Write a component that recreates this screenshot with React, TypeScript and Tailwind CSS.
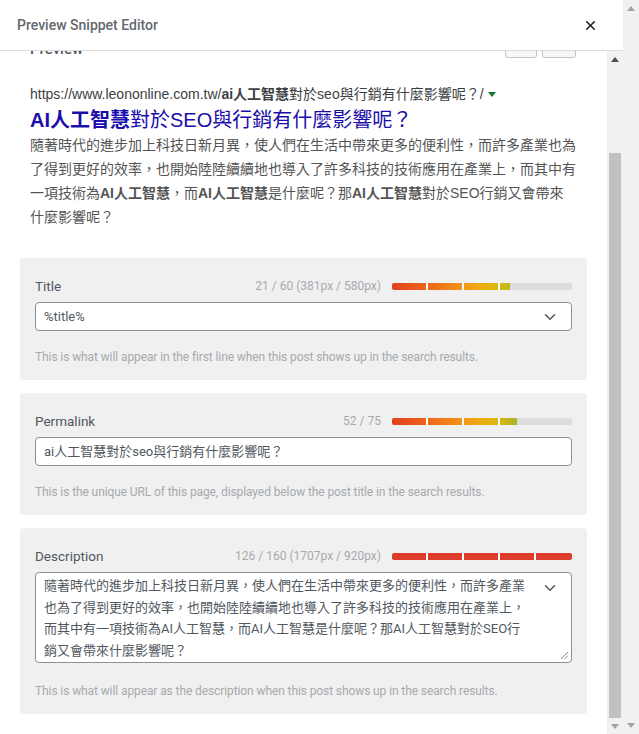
import { ChevronDown, Monitor, Smartphone, X } from "lucide-react";

const ui = "font-['Roboto','Noto_Sans_CJK_TC',sans-serif]";
const serp = "font-['Liberation_Sans','Noto_Sans_CJK_TC',sans-serif]";

function Arrow({ up, color }: { up?: boolean; color: string }) {
  return (
    <svg width="8" height="5" viewBox="0 0 8 5">
      <polygon points={up ? "0,5 8,5 4,0" : "0,0 8,0 4,5"} fill={color} />
    </svg>
  );
}

function LengthBar({ used, over }: { used: number; over?: boolean }) {
  const fill = Math.round(180 * Math.min(used, 1));
  const marks = [34, 70, 106, 142].filter((m) => m < fill);
  return (
    <div className="relative ml-[11px] h-[7px] w-[180px] shrink-0 overflow-hidden rounded-[2px] bg-[#dcdcde]">
      {over ? (
        <div className="h-full w-full bg-[#dd3b2c]" />
      ) : (
        <div className="h-full overflow-hidden" style={{ width: fill }}>
          <div className="h-full w-[180px] bg-[linear-gradient(to_right,#e2401c_0%,#ef6a1a_22%,#f2921a_38%,#eeaa12_48%,#e2b50c_56%,#cfb814_62%,#b0b526_68%,#7bb52c_100%)]" />
        </div>
      )}
      {marks.map((m) => (
        <div key={m} className="absolute top-0 h-full w-[2px] bg-white" style={{ left: m }} />
      ))}
    </div>
  );
}

function FieldHead({ label, count, used, over }: { label: string; count: string; used: number; over?: boolean }) {
  return (
    <div className="flex h-[20px] items-center">
      <div className="flex-1 text-[13.5px] text-[#50575e]">{label}</div>
      <div className="text-[12px] text-[#a7aaad]">{count}</div>
      <LengthBar used={used} over={over} />
    </div>
  );
}

function Help({ children, className = "mt-[18px]" }: { children: React.ReactNode; className?: string }) {
  return (
    <div className={`${className} h-[16px] whitespace-nowrap text-[12px] leading-[16px] tracking-[-0.1px] text-[#a7aaad]`}>
      {children}
    </div>
  );
}

export default function App() {
  return (
    <div className={`flex h-[734px] w-[639px] overflow-hidden bg-white ${ui}`}>
      <div className="flex min-w-0 flex-1 flex-col">
        <header className="flex h-[51px] shrink-0 items-center justify-between border-b border-[#dcdcde] pl-[17px] pr-[25px]">
          <h1 className="text-[14px] font-medium text-[#646970]">Preview Snippet Editor</h1>
          <X size={15} strokeWidth={2.6} className="text-[#1d2327]" />
        </header>

        <div className="flex min-h-0 flex-1">
          <div className="min-w-0 flex-1 overflow-hidden">
            <div className="-mt-[24px] px-[20px]">
              <div className="flex h-[31px] items-end justify-between">
                <h2 className="pl-[10px] text-[15px] font-medium leading-[18px] text-[#50575e]">Preview</h2>
                <div className="flex gap-[5px] pr-[11px]">
                  <div className="flex h-[30px] w-[32px] items-center justify-center rounded-[3px] border border-[#c3c4c7] bg-[#f6f7f7] text-[#8c8f94]">
                    <Monitor size={14} />
                  </div>
                  <div className="flex h-[30px] w-[34px] items-center justify-center rounded-[3px] border border-[#c3c4c7] bg-[#f6f7f7] text-[#8c8f94]">
                    <Smartphone size={14} />
                  </div>
                </div>
              </div>

              <div className={`mt-[26px] pl-[10px] ${serp}`}>
                <div className="flex items-center gap-[4px] whitespace-nowrap text-[14px] leading-[20px] text-[#3c4043]">
                  <span>
                    https://www.leononline.com.tw/<b>ai人工智慧</b>對於seo與行銷有什麼影響呢？/
                  </span>
                  <Arrow color="#0a7a2a" />
                </div>
                <div className="mt-[3px] whitespace-nowrap text-[20px] leading-[26px] text-[#1a0dab]">
                  <b>AI人工智慧</b>對於SEO與行銷有什麼影響呢？
                </div>
                <p className="whitespace-nowrap text-[14px] leading-[24px] text-[#545454]">
                  隨著時代的進步加上科技日新月異，使人們在生活中帶來更多的便利性，而許多產業也為
                  <br />
                  了得到更好的效率，也開始陸陸續續地也導入了許多科技的技術應用在產業上，而其中有
                  <br />
                  一項技術為<b>AI人工智慧</b>，而<b>AI人工智慧</b>是什麼呢？那<b>AI人工智慧</b>對於SEO行銷又會帶來
                  <br />
                  什麼影響呢？
                </p>
              </div>

              <section className="mt-[29px] rounded-[4px] bg-[#f0f0f1] px-[15px] pb-[15px] pt-[18px]">
                <FieldHead label="Title" count="21 / 60 (381px / 580px)" used={381 / 580} />
                <div className="mt-[6px] flex h-[29px] items-center justify-between rounded-[4px] border border-[#8c8f94] bg-white pl-[8px] pr-[12px]">
                  <span className="text-[13px] text-[#50575e]">%title%</span>
                  <ChevronDown size={18} strokeWidth={2} className="text-[#50575e]" />
                </div>
                <Help>This is what will appear in the first line when this post shows up in the search results.</Help>
              </section>

              <section className="mt-[13px] rounded-[4px] bg-[#f0f0f1] px-[15px] pb-[15px] pt-[18px]">
                <FieldHead label="Permalink" count="52 / 75" used={52 / 75} />
                <div className="mt-[6px] flex h-[29px] items-center rounded-[4px] border border-[#8c8f94] bg-white pl-[8px]">
                  <span className="text-[13px] text-[#50575e]">ai人工智慧對於seo與行銷有什麼影響呢？</span>
                </div>
                <Help>This is the unique URL of this page, displayed below the post title in the search results.</Help>
              </section>

              <section className="mt-[13px] rounded-[4px] bg-[#f0f0f1] px-[15px] pb-[15px] pt-[18px]">
                <FieldHead label="Description" count="126 / 160 (1707px / 920px)" used={1} over />
                <div className="mt-[6px] flex h-[91px] rounded-[4px] border border-[#8c8f94] bg-white pl-[8px]">
                  <div className="flex-1 whitespace-nowrap pt-[2px] text-[13px] leading-[21.5px] text-[#50575e]">
                    隨著時代的進步加上科技日新月異，使人們在生活中帶來更多的便利性，而許多產業
                    <br />
                    也為了得到更好的效率，也開始陸陸續續地也導入了許多科技的技術應用在產業上，
                    <br />
                    而其中有一項技術為AI人工智慧，而AI人工智慧是什麼呢？那AI人工智慧對於SEO行
                    <br />
                    銷又會帶來什麼影響呢？
                  </div>
                  <div className="flex flex-col items-end justify-between pb-[2px] pr-[2px] pt-[6px]">
                    <ChevronDown size={18} strokeWidth={2} className="mr-[10px] text-[#50575e]" />
                    <svg width="9" height="9" viewBox="0 0 9 9" className="text-[#8c8f94]">
                      <path d="M1 8 L8 1 M4.5 8 L8 4.5" stroke="currentColor" strokeWidth="1" />
                    </svg>
                  </div>
                </div>
                <Help className="mt-[20px]">This is what will appear as the description when this post shows up in the search results.</Help>
              </section>
              <div className="h-[20px]" />
            </div>
          </div>

          <div className="flex w-[16px] shrink-0 flex-col bg-[#f1f1f1]">
            <div className="flex h-[16px] items-center justify-center">
              <Arrow up color="#505050" />
            </div>
            <div className="flex flex-1 flex-col px-[2px]">
              <div className="h-[86px]" />
              <div className="flex-1 bg-[#c1c1c1]" />
            </div>
            <div className="flex h-[16px] items-center justify-center">
              <Arrow color="#a3a3a3" />
            </div>
          </div>
        </div>
      </div>

      <div className="flex w-[16px] shrink-0 flex-col justify-between bg-[#f1f1f1] py-[6px]">
        <div className="flex justify-center">
          <Arrow up color="#a3a3a3" />
        </div>
        <div className="flex justify-center">
          <Arrow color="#a3a3a3" />
        </div>
      </div>
    </div>
  );
}
